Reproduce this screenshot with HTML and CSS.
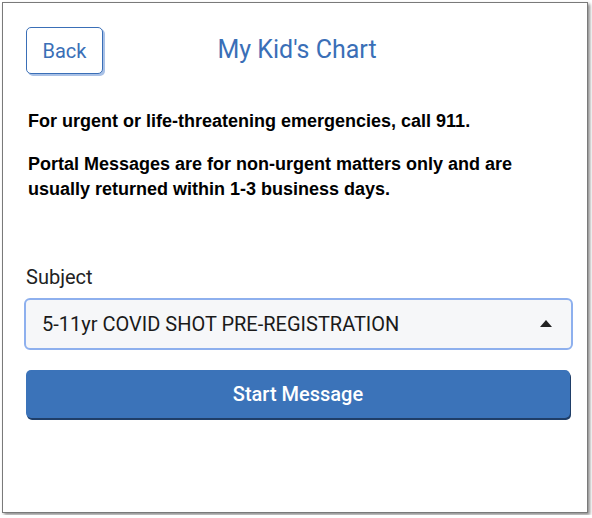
FILE: index.html
```html
<!DOCTYPE html>
<html lang="en">
<head>
    <meta charset="UTF-8">
    <meta name="viewport" content="width=device-width, initial-scale=1.0">
    <title>My Kid's Chart</title>
    <link rel="stylesheet" href="styles.css">
</head>
<body>

    <div class="frame">
        <div class="header">
            <button class="back-btn" type="button">Back</button>
            <h1 class="title">My Kid's Chart</h1>
            <span></span>
        </div>

        <div class="notice">
            <p>For urgent or life-threatening emergencies, call 911.</p>
            <p>Portal Messages are for non-urgent matters only and are usually returned within 1-3 business days.</p>
        </div>

        <form class="message-form">
            <label for="subject" class="label">Subject</label>
            <div class="select-box">
                <span id="subject">5-11yr COVID SHOT PRE-REGISTRATION</span>
                <svg class="caret" width="12" height="7" viewBox="0 0 12 7"><path d="M0 7 L6 0 L12 7 Z" fill="#222"/></svg>
            </div>
            <button type="submit" class="start-btn">Start Message</button>
        </form>
    </div>

</body>
</html>
```

FILE: styles.css
```css
body { margin: 0; font-family: Roboto, "Liberation Sans", sans-serif; background: #fff; }
.frame {
    margin: 2px; width: 584px; height: 509px; border: 1px solid #7a7a7a;
    box-shadow: 2px 2px 3px rgba(0, 0, 0, 0.45); background: #fff;
}
.header {
    display: grid; grid-template-columns: 1fr auto 1fr; align-items: center;
    padding: 24px 19px 0 23px;
}
.back-btn {
    justify-self: start; width: 77px; height: 47px; background: #fff;
    border: 1px solid #3a6fb7; border-radius: 5px; box-shadow: 2px 2px 0 #a9c1e6;
    color: #3a6fb7; font-family: Roboto, sans-serif; font-size: 20px; cursor: pointer;
}
.title { margin: 0 0 3px; font-size: 25px; font-weight: 400; color: #3a6fb7; }
.notice { padding: 35px 0 0 25px; font-family: "Liberation Sans", Arial, sans-serif; font-weight: bold; font-size: 18px; color: #000; }
.notice p { margin: 0 0 18px; line-height: 25px; width: 520px; }
.message-form { padding: 45px 14px 0 21px; }
.label { display: block; font-size: 20px; color: #222; margin: 0 0 9px 2px; }
.select-box {
    display: flex; justify-content: space-between; align-items: center;
    height: 48px; padding: 0 19px 0 16px; border: 2px solid #8eb0ee; border-radius: 6px;
    background: #f6f7f9; font-size: 20px; color: #1a1a1a;
}
.caret { margin-top: -2px; }
.start-btn {
    display: block; width: 544px; height: 48px; margin: 20px 0 0 2px;
    background-color: #3b73b9; color: white; border: none; border-radius: 5px;
    box-shadow: 1px 2px 0 #1f3e68; font-family: Roboto, sans-serif; font-size: 20px; font-weight: 500;
    cursor: pointer;
}
```
